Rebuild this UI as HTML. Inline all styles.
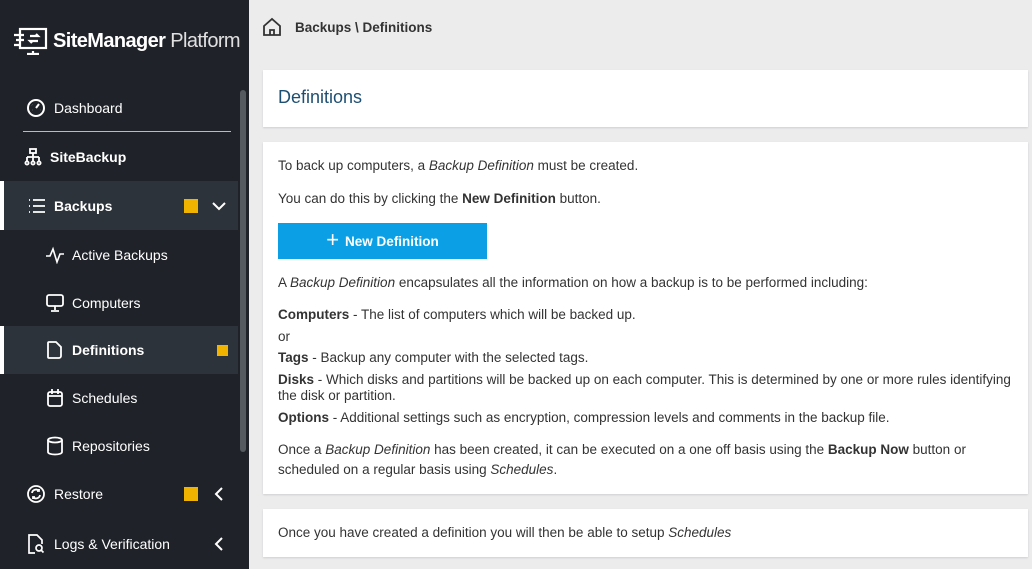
<!DOCTYPE html>
<html><head><meta charset="utf-8"><style>
*{margin:0;padding:0;box-sizing:border-box}
body{width:1032px;height:569px;overflow:hidden;background:#ececed;font-family:"Liberation Sans",sans-serif;position:relative}
.sb{position:absolute;left:0;top:0;width:249px;height:569px;background:#1f2329;color:#fff}
.it{position:absolute;left:0;width:238px;height:48px;font-size:14px;display:flex;align-items:center}
.it svg{position:absolute}
.it span{position:absolute}
.act{background:#2d333a}
.bar{position:absolute;left:0;width:4px;height:48px;background:#fff}
.sq{position:absolute;background:#f0b400}
.main div.l{position:absolute;left:278px;font-size:13.5px;color:#333;white-space:nowrap;line-height:16px}
.card{position:absolute;left:263px;width:765px;background:#fff;box-shadow:0 1px 2px rgba(0,0,0,.12)}
</style></head><body>
<div class="sb">
 <svg style="position:absolute;left:13px;top:27px" width="36" height="28" viewBox="0 0 36 28" fill="none" stroke="#fff" stroke-width="2.2"><rect x="7" y="2" width="26" height="19"/><path d="M1 8h10M3 13h8M1 18h6M20 24v3M14 27h12M17 9h8l-2-2M25 14h-8l2 2"/></svg>
 <div style="position:absolute;left:53px;top:30px;font-size:20px;letter-spacing:-0.6px;white-space:nowrap"><b style="font-weight:700">SiteManager</b> <span style="font-weight:400;color:#e0e0e0">Platform</span></div>
 <div style="position:absolute;left:240px;top:90px;width:6px;height:362px;background:#555a60;border-radius:3px"></div>
 <div class="it" style="top:84px"><svg style="left:26px" width="20" height="20" viewBox="0 0 20 20" fill="none" stroke="#fff" stroke-width="2"><circle cx="10" cy="10" r="8"/><path d="M10 10l3-4M6 7l.1.1M6 12h.1M14 12h.1"/></svg><span style="left:54px">Dashboard</span></div>
 <div style="position:absolute;left:23px;top:131px;width:208px;height:1px;background:#bbb"></div>
 <div class="it" style="top:133px;font-weight:700"><svg style="left:23px" width="20" height="20" viewBox="0 0 20 20" fill="none" stroke="#fff" stroke-width="1.8"><rect x="7" y="2" width="6" height="4"/><path d="M10 6v4M4 10h12M4 10v4M10 10v4M16 10v4"/><circle cx="4" cy="16" r="1.6"/><circle cx="10" cy="16" r="1.6"/><circle cx="16" cy="16" r="1.6"/></svg><span style="left:50px">SiteBackup</span></div>
 <div class="it act" style="top:181px;height:49px;font-weight:700"><svg style="left:27px" width="20" height="18" viewBox="0 0 20 18" fill="none" stroke="#fff" stroke-width="1.8"><path d="M2 3h1M2 9h1M2 15h1M6 3h12M6 9h12M6 15h12"/></svg><span style="left:54px">Backups</span>
 <div class="sq" style="left:184px;top:18px;width:14px;height:14px"></div>
 <svg style="left:211px;top:19px" width="16" height="12" viewBox="0 0 16 12" fill="none" stroke="#fff" stroke-width="2"><path d="M2 3l6 6 6-6"/></svg></div>
 <div class="bar" style="top:181px;height:49px"></div>
 <div class="it" style="top:231px"><svg style="left:45px" width="20" height="18" viewBox="0 0 20 18" fill="none" stroke="#fff" stroke-width="1.6"><path d="M1 10h4l3-7 4 13 3-8h4"/></svg><span style="left:72px">Active Backups</span></div>
 <div class="it" style="top:279px"><svg style="left:45px" width="20" height="20" viewBox="0 0 20 20" fill="none" stroke="#fff" stroke-width="1.8"><rect x="2" y="2" width="16" height="11" rx="2"/><path d="M10 13v4M6 18h8"/></svg><span style="left:72px">Computers</span></div>
 <div class="it act" style="top:326px;font-weight:700"><svg style="left:46px" width="18" height="20" viewBox="0 0 18 20" fill="none" stroke="#fff" stroke-width="1.8"><path d="M3 2h7l5 5v9a2 2 0 0 1-2 2H3a1 1 0 0 1-1-1V3a1 1 0 0 1 1-1z"/></svg><span style="left:72px">Definitions</span>
 <div class="sq" style="left:217px;top:19px;width:11px;height:11px"></div></div>
 <div class="bar" style="top:326px"></div>
 <div class="it" style="top:374px"><svg style="left:46px" width="18" height="20" viewBox="0 0 18 20" fill="none" stroke="#fff" stroke-width="1.8"><rect x="2" y="4" width="14" height="14" rx="2"/><path d="M2 8h14M6 1v5M12 1v5"/></svg><span style="left:72px">Schedules</span></div>
 <div class="it" style="top:422px"><svg style="left:46px" width="18" height="20" viewBox="0 0 18 20" fill="none" stroke="#fff" stroke-width="1.8"><ellipse cx="9" cy="4" rx="7" ry="2.5"/><path d="M2 4v12c0 1.5 3 2.5 7 2.5s7-1 7-2.5V4"/></svg><span style="left:72px">Repositories</span></div>
 <div class="it" style="top:470px"><svg style="left:26px" width="20" height="20" viewBox="0 0 20 20" fill="none" stroke="#fff" stroke-width="1.8"><circle cx="10" cy="10" r="8"/><path d="M6 9a4 4 0 0 1 7-2M14 11a4 4 0 0 1-7 2M13 5v2h-2M7 15v-2h2"/></svg><span style="left:54px">Restore</span>
 <div class="sq" style="left:184px;top:17px;width:14px;height:14px"></div>
 <svg style="left:213px;top:16px" width="12" height="16" viewBox="0 0 12 16" fill="none" stroke="#fff" stroke-width="2"><path d="M9 2L3 8l6 6"/></svg></div>
 <div class="it" style="top:520px"><svg style="left:26px" width="20" height="22" viewBox="0 0 20 22" fill="none" stroke="#fff" stroke-width="1.7"><path d="M9 20H3V2h8l5 5v4"/><circle cx="13" cy="15" r="3"/><path d="M15 17l2.5 2.5"/></svg><span style="left:54px">Logs &amp; Verification</span>
 <svg style="left:213px;top:16px" width="12" height="16" viewBox="0 0 12 16" fill="none" stroke="#fff" stroke-width="2"><path d="M9 2L3 8l6 6"/></svg></div>
</div>
<svg style="position:absolute;left:262px;top:17px" width="20" height="20" viewBox="0 0 20 20" fill="none" stroke="#333" stroke-width="1.8"><path d="M2 9L10 2l8 7v9H2z"/><path d="M8 18v-5h4v5"/></svg>
<div style="position:absolute;left:295px;top:20px;font-size:13.5px;font-weight:700;color:#333">Backups \ Definitions</div>
<div class="card" style="top:70px;height:57px"><div style="position:absolute;left:15px;top:17px;font-size:18px;color:#1d4f73">Definitions</div></div>
<div class="card" style="top:142px;height:352px"></div>
<div class="card" style="top:509px;height:48px"></div>
<div style="position:absolute;left:278px;top:223px;width:209px;height:36px;background:#0ba0e6;color:#fff;font-size:13.5px;font-weight:700;display:flex;align-items:center;justify-content:center"><span style="font-weight:300;font-size:22px;margin-right:6px;margin-top:-3px">+</span>New Definition</div>
<div class="main">
<div class="l" style="top:158px">To back up computers, a <i>Backup Definition</i> must be created.</div>
<div class="l" style="top:191px">You can do this by clicking the <b>New Definition</b> button.</div>
<div class="l" style="top:275px">A <i>Backup Definition</i> encapsulates all the information on how a backup is to be performed including:</div>
<div class="l" style="top:307px"><b>Computers</b> - The list of computers which will be backed up.</div>
<div class="l" style="top:329px">or</div>
<div class="l" style="top:350px"><b>Tags</b> - Backup any computer with the selected tags.</div>
<div class="l" style="top:372px"><b>Disks</b> - Which disks and partitions will be backed up on each computer. This is determined by one or more rules identifying</div>
<div class="l" style="top:388px">the disk or partition.</div>
<div class="l" style="top:410px"><b>Options</b> - Additional settings such as encryption, compression levels and comments in the backup file.</div>
<div class="l" style="top:442px">Once a <i>Backup Definition</i> has been created, it can be executed on a one off basis using the <b>Backup Now</b> button or</div>
<div class="l" style="top:462px">scheduled on a regular basis using <i>Schedules</i>.</div>
<div class="l" style="top:525px">Once you have created a definition you will then be able to setup <i>Schedules</i></div>
</div>
</body></html>
